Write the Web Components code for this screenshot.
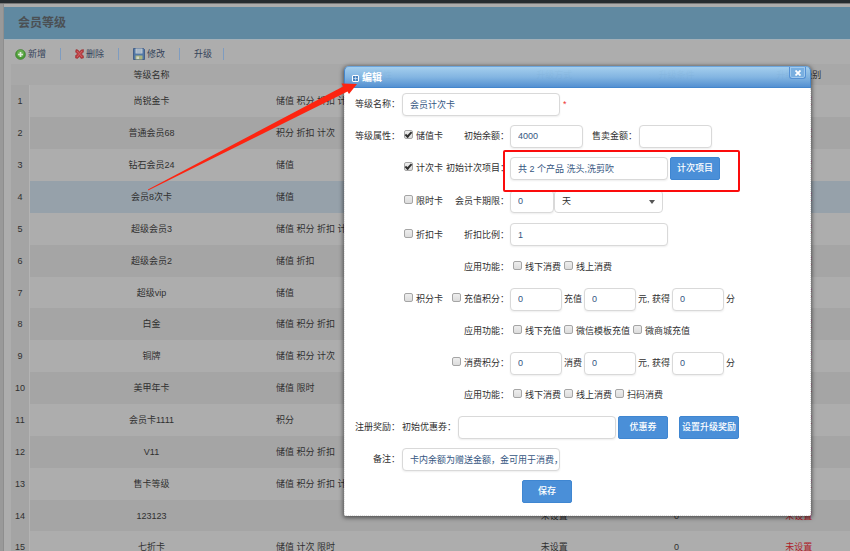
<!DOCTYPE html>
<html lang="zh-CN">
<head>
<meta charset="utf-8">
<title>会员等级</title>
<style>
  body { margin: 0; height: 100vh; overflow: hidden; background: #adadad; color: #303030;
    font: 9px/12px "Liberation Sans", "Noto Sans CJK SC", sans-serif; }
</style>
</head>
<body>
<level-page>
  <tool-bar slot="tools">
    <tool-button icon="add">新增</tool-button>
    <tool-button icon="delete">删除</tool-button>
    <tool-button icon="save">修改</tool-button>
    <tool-button>升级</tool-button>
  </tool-bar>
  <level-table></level-table>
  <edit-dialog slot="overlay" heading="编辑"><level-form></level-form></edit-dialog>
  <mark-layer slot="overlay"></mark-layer>
</level-page>

<script>
const define = (name, html, setup) => {
  const template = document.createElement('template');
  template.innerHTML = html;
  customElements.define(name, class extends HTMLElement {
    constructor() {
      super();
      this.attachShadow({ mode: 'open' }).append(template.content.cloneNode(true));
    }
    connectedCallback() { if (setup) setup(this, this.shadowRoot); }
  });
};

define('level-page', `
<style>
  :host { display: flex; flex-direction: column; position: relative; height: 100%; overflow: hidden; }
  .top { height: 3px; flex: none; background: #262c30; border-bottom: 1px solid #777; }
  .frame { flex: 1; min-height: 0; padding-top: 3px; border-left: 3px solid #999; box-shadow: inset 1px 0 #8e8e8e; }
  .main { margin-left: 1px; }
  h1 { margin: 0; padding: 0 14px; font-size: 12px; line-height: 32px; color: #4b5054; background: #6089a1; border-bottom: 1px solid #a3b0b8; }
  .content { padding-left: 7px; overflow: hidden; }
</style>
<div class="top"></div>
<div class="frame"><main class="main">
  <h1>会员等级</h1>
  <slot name="tools"></slot>
  <div class="content"><slot></slot></div>
</main></div>
<slot name="overlay"></slot>`);

define('tool-bar', `
<style>:host { display: flex; align-items: center; height: 24px; padding: 4px 0 0 0; box-sizing: border-box; }</style>
<slot></slot>`);

const icons = {
  add: `<svg width="11" height="11" viewBox="0 0 22 22"><circle cx="11" cy="11" r="10" fill="#4a9a35" stroke="#39792c"/><circle cx="11" cy="9" r="7" fill="#65ad4e"/><path d="M11 6v10M6 11h10" stroke="#e0e8dc" stroke-width="3.4"/></svg>`,
  delete: `<svg width="9" height="10" viewBox="0 0 18 20"><path d="M2 1l4 1 3 4 3-4 5-1v5l-4 4 4 4v4l-5 1-3-4-4 4-4-1v-5l4-3-4-4z" fill="#b83a3e" stroke="#983035"/><path d="M4 4l10 12M14 4L4 16" stroke="#cf6265" stroke-width="2"/></svg>`,
  save: `<svg width="12" height="12" viewBox="0 0 24 24"><path d="M1 1h20l2 2v20H1z" fill="#5278a6" stroke="#304f7d" stroke-width="1.5"/><path d="M5 1h14v10H5z" fill="#c3cbd2"/><path d="M7 4h10M7 8h10" stroke="#7896b5" stroke-width="1.4"/><path d="M5 15h14v8H5z" fill="#a9b37f"/><path d="M7 17h5v5H7z" fill="#d0d4c7"/></svg>`
};
define('tool-button', `
<style>
  :host { display: flex; padding: 0 14px; border-right: 1px solid #7e9cc0; }
  :host(:first-child) { padding-left: 11px; }
  :host(:last-child) { padding-right: 11px; }
  button { display: flex; align-items: center; gap: 2px; padding: 0; border: 0; background: none; font: inherit; color: #34435a; }
  svg { display: block; }
</style>
<button type="button"><span class="icon"></span><slot></slot></button>`,
(host, root) => {
  const icon = root.querySelector('.icon');
  const art = icons[host.getAttribute('icon')];
  if (art) icon.innerHTML = art; else icon.remove();
});

const levels = [
  ['尚锐金卡', '储值 积分 折扣 计次'], ['普通会员68', '积分 折扣 计次'], ['钻石会员24', '储值'],
  ['会员8次卡', '储值'], ['超级会员3', '储值 积分 折扣 计次'], ['超级会员2', '储值 折扣'],
  ['超级vip', '储值'], ['白金', '储值 积分 折扣'], ['铜牌', '储值 积分 计次'],
  ['美甲年卡', '储值 限时'], ['会员卡1111', '积分'], ['V11', '储值 积分 折扣'],
  ['售卡等级', '储值 积分 折扣 计次'], ['123123', ''], ['七折卡', '储值 计次 限时']
];
define('level-table', `
<style>
  :host { display: block; margin-right: -10px; }
  table { width: 100%; table-layout: fixed; border-collapse: separate; border-spacing: 0; }
  .no { width: 19px; } .name { width: 243px; } .kind { width: 220px; }
  th { height: 21px; padding: 0; font-weight: normal; background: #a8a8a8; }
  td { height: 32px; padding: 0; text-align: center; }
  td:nth-child(3) { text-align: left; padding-left: 3px; }
  td:last-child { color: #ad2028; }
  tbody tr:nth-child(even) td { background: #a5a5a5; }
  tbody tr.on td { background: #96a1aa; }
  tbody tr td:first-child, tbody tr.on td:first-child { background: #a4a4a4; border-right: 1px solid #b3b3b3; box-sizing: border-box; }
  tbody tr:nth-child(7n) td { height: 31px; }
</style>
<table>
  <colgroup><col class="no"><col class="name"><col class="kind"><col><col><col></colgroup>
  <thead><tr><th></th><th>等级名称</th><th>属性</th><th>升级方式</th><th>升级条件</th><th>升级后级别</th></tr></thead>
  <tbody></tbody>
</table>`,
(host, root) => {
  root.querySelector('tbody').innerHTML = levels.map(([name, kind], i) =>
    `<tr${i === 3 ? ' class="on"' : ''}><td>${i + 1}</td><td>${name}</td><td>${kind}</td><td>未设置</td><td>0</td><td>未设置</td></tr>`).join('');
});

define('edit-dialog', `
<style>
  :host { position: absolute; left: 344px; right: 39px; top: 66px; display: block; border-radius: 5px 5px 2px 2px; box-shadow: 0 1px 4px 1px rgba(0,0,0,.5); }
  header { display: flex; align-items: center; gap: 3px; height: 22px; box-sizing: border-box; padding: 2px 12px 0 7px; color: #fff;
    border: 1px solid #4486cc; border-top-color: #6ca5dc; border-radius: 5px 5px 0 0; 
    background: linear-gradient(rgba(164,208,240,.96), rgba(130,182,228,.96) 50%, rgba(82,144,210,.98)); }
  header { padding-right: 4px; }
  h2 { margin: 0; flex: 1; font-size: 10px; line-height: 14px; }
  button { align-self: flex-start; display: grid; place-items: center; width: 17px; height: 12px; margin-top: -2px; padding: 0;
    background: #79afe0; border: 1px solid #5591d4; border-top: 0; border-radius: 0 0 3px 3px; box-shadow: inset 0 0 0 1px #a0c9ed; }
  .body { margin: 0; padding: 0 1px 8px; background: #fff; border: 1px dotted #d9d9d9; border-top: 0; border-radius: 0 0 2px 2px; }
</style>
<section role="dialog" aria-labelledby="heading">
  <header>
    <svg width="7" height="7" viewBox="0 0 14 14"><rect x="1" y="1" width="12" height="12" rx="1" fill="#4a83be" stroke="#fff" stroke-width="2"/><path d="M7 3v8M3 7h8" stroke="#d9eafa" stroke-width="1.4"/></svg>
    <h2 id="heading"></h2>
    <button type="button" aria-label="关闭"><svg width="6" height="6" viewBox="0 0 12 12"><path d="M1 1l10 10M11 1L1 11" stroke="#fff" stroke-width="3.6"/></svg></button>
  </header>
  <div class="body"><slot></slot></div>
</section>`,
(host, root) => { root.querySelector('h2').textContent = host.getAttribute('heading'); });

define('form-row', `
<style>
  :host { display: grid; grid-template-columns: 54px 1fr; column-gap: 2px; align-items: center; height: 32px; }
  :host([tall]) { height: 34px; }
  :host([mid]) { height: 33px; }
  :host([split]) { grid-template-columns: 54px 105px 1fr; column-gap: 4px; }
  .title { text-align: right; white-space: nowrap; }
  .kind { display: none; }
  :host([split]) .kind { display: flex; align-items: center; justify-content: space-between; white-space: nowrap; }
  .kind slot[name=sub] { display: flex; flex: 1; justify-content: flex-end; align-items: center; }
  .body { display: flex; align-items: center; gap: 2px; white-space: nowrap; }
  :host([split]) .body { margin-left: -3px; }
</style>
<div class="title"><slot name="title"></slot></div>
<div class="kind"><slot name="kind"></slot><slot name="sub"></slot></div>
<div class="body"><slot></slot></div>`);

define('check-item', `
<style>
  :host { display: inline-flex; }
  label { display: flex; align-items: center; gap: 3px; white-space: nowrap; }
  input { appearance: none; display: grid; place-items: center; width: 9px; height: 9px; margin: 0 0 3px; border: 1px solid #a5a5a5; border-radius: 2px; background: linear-gradient(#eee, #dcdcdc); }
  input:checked::before { content: ""; width: 5px; height: 2px; border: solid #303030; border-width: 0 0 2px 2px; transform: translateY(-1px) rotate(-48deg); }
</style>
<label><input type="checkbox"><span><slot></slot></span></label>`,
(host, root) => { root.querySelector('input').checked = host.hasAttribute('checked'); });

define('level-form', `
<style>
  :host { display: block; }
  form { margin: 0; }
  input { box-sizing: border-box; height: 23px; padding: 0 0 0 7px; border: 1px solid #d9d9d9; border-radius: 4px; background: #fff; font: inherit; color: #35567f; box-shadow: 0 1px 2px #eee; }
  .wide { width: 158px; } .money { width: 73px; } .num { width: 52px; } .days { width: 44px; }
  .pick { position: relative; display: flex; margin-left: -2px; }
  select { appearance: none; box-sizing: border-box; width: 109px; height: 23px; padding: 0 7px; border: 1px solid #d9d9d9; border-radius: 4px; background: #fff; font: inherit; color: #303030; }
  .pick::after { content: ""; position: absolute; right: 8px; top: 10px; border: 3px solid transparent; border-top: 4px solid #555; border-bottom: 0; pointer-events: none; }
  button { box-sizing: border-box; width: 50px; height: 23px; padding: 0; border: 1px solid #3f86d1; border-radius: 2px; background: #4a8fd8; color: #fff; font: inherit; font-weight: 500; }
  .reward { width: 60px; margin-left: 9px; }
  .star { color: #e33; margin-left: 1px; }
  .gap { margin-left: 7px; }
  .checks { display: flex; gap: 3px; padding-left: 3px; }
  .save { display: flex; height: 32px; align-items: center; padding-left: 176px; }
</style>
<form>
  <form-row><label slot="title" for="name">等级名称：</label><input id="name" class="wide" value="会员计次卡"><span class="star">*</span></form-row>
  <form-row split><span slot="title">等级属性：</span><check-item slot="kind" checked>储值卡</check-item><label slot="sub" for="balance">初始余额：</label>
    <input id="balance" class="money" value="4000"><label class="gap" for="price">售卖金额：</label><input id="price" class="money"></form-row>
  <form-row split><check-item slot="kind" checked>计次卡</check-item><label slot="sub" for="items">初始计次项目：</label>
    <input id="items" class="wide" value="共 2 个产品 洗头,洗剪吹"><button type="button">计次项目</button></form-row>
  <form-row split tall><check-item slot="kind">限时卡</check-item><label slot="sub" for="term">会员卡期限：</label>
    <input id="term" class="days" value="0"><span class="pick"><select aria-label="期限单位"><option>天</option></select></span></form-row>
  <form-row split mid><check-item slot="kind">折扣卡</check-item><label slot="sub" for="rate">折扣比例：</label><input id="rate" class="wide" value="1"></form-row>
  <form-row split><span slot="sub">应用功能：</span><div class="checks"><check-item>线下消费</check-item><check-item>线上消费</check-item></div></form-row>
  <form-row split><check-item slot="kind">积分卡</check-item><check-item slot="sub">充值积分：</check-item>
    <input class="num" value="0" aria-label="充值积分"><label for="pay">充值</label><input id="pay" class="num" value="0"><label for="get">元, 获得</label><input id="get" class="num" value="0"><span>分</span></form-row>
  <form-row split><span slot="sub">应用功能：</span><div class="checks"><check-item>线下充值</check-item><check-item>微信模板充值</check-item><check-item>微商城充值</check-item></div></form-row>
  <form-row split><check-item slot="sub">消费积分：</check-item>
    <input class="num" value="0" aria-label="消费积分"><label for="spend">消费</label><input id="spend" class="num" value="0"><label for="earn">元, 获得</label><input id="earn" class="num" value="0"><span>分</span></form-row>
  <form-row split><span slot="sub">应用功能：</span><div class="checks"><check-item>线下消费</check-item><check-item>线上消费</check-item><check-item>扫码消费</check-item></div></form-row>
  <form-row><span slot="title">注册奖励：</span><label for="coupon">初始优惠券：</label><input id="coupon" class="wide"><button type="button">优惠券</button><button type="button" class="reward">设置升级奖励</button></form-row>
  <form-row><label slot="title" for="note">备注：</label><input id="note" class="wide" value="卡内余额为赠送金额，金可用于消费，"></form-row>
  <div class="save"><button type="button">保存</button></div>
</form>`);

define('mark-layer', `
<style>
  :host { position: absolute; left: 0; top: 0; pointer-events: none; }
  svg { display: block; }
</style>
<svg width="850" height="551" viewBox="0 0 850 551" aria-hidden="true">
  <path d="M148 189.500L343 86.500L341.500 83.500L357 84L349 94L347.500 91.500L148 190.500Z" fill="#fd2411"/>
  <rect x="504" y="151" width="235" height="40" rx="1" fill="none" stroke="#fb0c0c" stroke-width="2"/>
</svg>`);
</script>
</body>
</html>
